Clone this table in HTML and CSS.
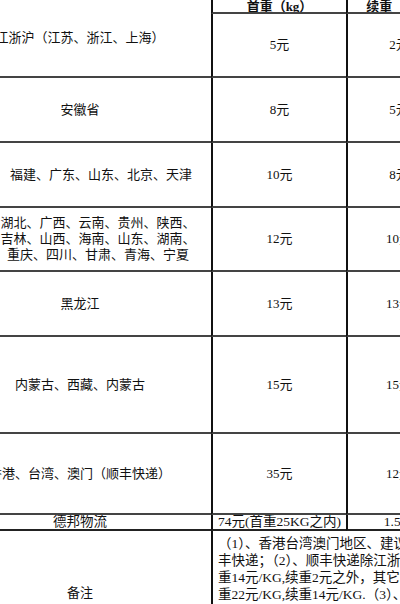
FILE: index.html
```html
<!DOCTYPE html>
<html lang="zh-CN">
<head>
<meta charset="utf-8">
<title>快递运费表</title>
<link rel="stylesheet" href="styles.css">
</head>
<body>
<div class="sheet">
  <div class="cell area span-top">江浙沪（江苏、浙江、上海）</div>
  <div class="cell head col">首重（kg）</div>
  <div class="cell head col">续重（kg）</div>

  <div class="cell col">5元</div>
  <div class="cell col">2元</div>

  <div class="cell area">安徽省</div>
  <div class="cell col">8元</div>
  <div class="cell col">5元</div>

  <div class="cell area shift-a">福建、广东、山东、北京、天津</div>
  <div class="cell col">10元</div>
  <div class="cell col">8元</div>

  <div class="cell area shift-b">湖北、广西、云南、贵州、陕西、<br>吉林、山西、海南、山东、湖南、<br>重庆、四川、甘肃、青海、宁夏</div>
  <div class="cell col">12元</div>
  <div class="cell col">10元</div>

  <div class="cell area">黑龙江</div>
  <div class="cell col">13元</div>
  <div class="cell col">13元</div>

  <div class="cell area">内蒙古、西藏、内蒙古</div>
  <div class="cell col">15元</div>
  <div class="cell col">15元</div>

  <div class="cell area">香港、台湾、澳门（顺丰快递）</div>
  <div class="cell col">35元</div>
  <div class="cell col">12元</div>

  <div class="cell area thin">德邦物流</div>
  <div class="cell col thin left">74元(首重25KG之内)</div>
  <div class="cell col thin">1.5元</div>

  <div class="cell area note-label">备注</div>
  <div class="cell col note">（1）、香港台湾澳门地区、建议使用顺丰快递<br>丰快递；（2）、顺丰快递除江浙沪首重10元<br>重14元/KG,续重2元之外，其它地区首重<br>重22元/KG,续重14元/KG.（3）、偏远地区<br>价格由圆通获取后为准，请先联系客服</div>
</div>
</body>
</html>
```
FILE: styles.css
```css
html, body {
  margin: 0;
  padding: 0;
  background: #ffffff;
}

body {
  width: 400px;
  height: 604px;
  overflow: hidden;
  font-family: "Liberation Serif", "Noto Sans CJK SC", serif;
  color: #111;
}

.sheet {
  display: grid;
  grid-template-columns: 262px 135px 104px;
  grid-template-rows: 15px 64px 65px 65px 64px 65px 97px 81px 16px 124px;
  margin: -1px 0 0 -51px;
  width: 501px;
}

.cell {
  box-sizing: border-box;
  border-bottom: 2px solid #444;
  display: flex;
  align-items: center;
  justify-content: center;
  text-align: center;
  font-size: 13px;
  line-height: 16px;
  white-space: nowrap;
  overflow: hidden;
}

.col {
  border-left: 2px solid #111;
}

.span-top {
  grid-row: 1 / span 2;
}

.head {
  font-weight: bold;
  line-height: 13px;
  padding-top: 1px;
}

.shift-a {
  padding-left: 42px;
}

.shift-b {
  padding-left: 36px;
}

.thin {
  line-height: 14px;
  font-size: 13.5px;
  border-bottom-color: #222;
}

.left {
  justify-content: flex-start;
  padding-left: 5px;
}

.note-label {
  border-bottom: none;
}

.note {
  grid-column: 2 / span 2;
  border-bottom: none;
  align-items: flex-start;
  justify-content: flex-start;
  text-align: left;
  padding: 4px 0 0 5px;
  font-size: 13.5px;
  line-height: 17px;
}
```
